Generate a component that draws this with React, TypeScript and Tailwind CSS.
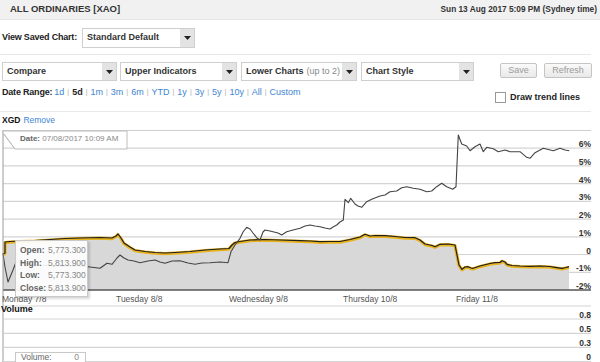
import React from "react";

type Pt = [number, number];

const MAIN: Pt[] = [
  [3, 254], [5, 253], [5, 242], [10, 241.5], [20, 241], [35, 240.5], [50, 239.5], [65, 238.5],
  [80, 238], [100, 237.5], [112, 238], [116, 236], [118, 234], [121, 238], [124, 243], [130, 247],
  [135, 250], [145, 251.5], [155, 252.5], [165, 253], [175, 252.5], [190, 251.5], [205, 250],
  [220, 249], [229, 248.5], [232, 245], [235, 242.5], [240, 241.5], [250, 240], [265, 239.5],
  [280, 240], [300, 240.7], [310, 241], [320, 241.7], [330, 241.5], [340, 241.5], [350, 239.5],
  [360, 237], [365, 234.3], [370, 236], [375, 235.5], [385, 235.7], [395, 236.5], [405, 237.5],
  [415, 237.7], [420, 240], [425, 244], [432, 245.5], [435, 246.7], [440, 244.3], [448, 244],
  [455, 245], [457, 255], [459, 265], [462, 269.3], [465, 267], [468, 266.7], [471, 268],
  [473, 268.3], [480, 266], [490, 263.5], [495, 262.7], [500, 262.5], [502, 260.7], [505, 262],
  [507, 264.3], [512, 265.5], [520, 266], [530, 266.3], [540, 266], [550, 266.5], [555, 267.3],
  [562, 268.3], [566, 267.5], [569, 266.7],
];

const XGD: Pt[] = [
  [3, 254], [5, 267], [8, 282], [13, 270], [16, 262], [20, 262], [40, 265], [60, 266], [80, 266],
  [88, 266.7], [100, 268.3], [107, 263.3], [112, 264.3], [117, 258], [120, 255], [124, 258],
  [128, 260], [134, 261], [140, 262.7], [148, 261], [155, 260], [160, 262], [165, 263.3],
  [172, 261], [180, 260.7], [188, 263], [195, 264.3], [202, 263], [210, 262.7], [220, 262],
  [228, 262.7], [231, 251.7], [235, 245], [240, 238.3], [243, 232], [246.7, 227.3], [250, 229],
  [253, 233], [257, 238], [260, 240], [263, 232], [265, 230], [270, 231], [273, 231.7],
  [278, 233], [281.7, 235], [286.7, 231.7], [293, 230], [300, 228.3], [305, 226], [310, 225],
  [315, 226], [320, 226.7], [325, 228], [330, 229], [333, 227], [336.7, 225], [340, 222],
  [343.3, 220], [345, 199.3], [348.3, 202.7], [350.7, 198.3], [355, 204], [358, 206],
  [361.7, 207.3], [366.7, 201.7], [371.7, 199.3], [380, 196], [385, 195], [390, 191.7],
  [396.7, 191], [401.7, 187.7], [406.7, 186.7], [413.3, 188.3], [420, 189.3], [426.7, 191.7],
  [431.7, 191], [436.7, 186.7], [441.7, 183.3], [446.7, 186.7], [452.7, 189.3], [456, 186.7],
  [458.3, 135], [461.7, 144], [466.7, 146], [470, 150.7], [475, 146.7], [480, 144],
  [483.3, 151.7], [486.7, 147.3], [493.3, 148.7], [498.3, 151.7], [505, 150], [510, 151.7],
  [520, 151.7], [526.7, 157.3], [530, 158.3], [535, 152.7], [543.3, 148.3], [553.3, 150.7],
  [560, 148.3], [565, 150], [569.3, 150.7],
];

const pts = (a: Pt[]) => a.map((p) => p.join(",")).join(" ");

const GRID = [148.2, 165.9, 183.7, 201.4, 219.1, 236.8, 254.5, 272.3];
const PCT = ["6%", "5%", "4%", "3%", "2%", "1%", "0", "-1%"];
const VOL_GRID = [306, 319, 333.3, 347.3, 361.5];
const VOL = ["0.8", "0.5", "0.3", "0"];
const DAYS: [string, number][] = [
  ["Monday 7/8", 2],
  ["Tuesday 8/8", 116],
  ["Wednesday 9/8", 229],
  ["Thursday 10/8", 343],
  ["Friday 11/8", 456],
];
const RANGES = ["1d", "5d", "1m", "3m", "6m", "YTD", "1y", "3y", "5y", "10y", "All", "Custom"];

function Caret() {
  return (
    <svg width="7" height="4" viewBox="0 0 7 4">
      <path d="M0 0h7L3.5 4z" fill="#222" />
    </svg>
  );
}

function Select({ className, children }: { className: string; children: React.ReactNode }) {
  return (
    <div className={`flex border border-[#cfcfcf] bg-white ${className}`}>
      <div className="flex-1 flex items-center pl-[4px] text-[9px] font-bold text-[#333] whitespace-nowrap overflow-hidden">
        {children}
      </div>
      <div className="w-[14px] bg-[#e3e3e3] flex items-center justify-center">
        <Caret />
      </div>
    </div>
  );
}

function Chart() {
  const fill = pts([...MAIN, [569, 290], [3, 290]]);
  return (
    <div className="relative h-[232px] mt-[4px]">
      <svg width="600" height="232" viewBox="0 130 600 232" className="block" fontFamily="'Liberation Sans', Arial, sans-serif">
        <line x1="3" y1="130.5" x2="591" y2="130.5" stroke="#cfcfcf" strokeWidth="1.2" />
        {GRID.map((y) => (
          <line key={y} x1="3" y1={y} x2="591" y2={y} stroke="#d4d4d4" strokeWidth="1.2" />
        ))}
        <polygon points={fill} fill="#d8d8d8" />
        <polyline points={pts(MAIN)} fill="none" stroke="#e8b320" strokeWidth="3.2" strokeLinejoin="round" transform="translate(0 0.6)" />
        <polyline points={pts(MAIN)} fill="none" stroke="#1e1e1e" strokeWidth="1.2" strokeLinejoin="round" />
        <polyline points={pts(XGD)} fill="none" stroke="#444" strokeWidth="1.1" strokeLinejoin="round" />
        <line x1="3" y1="290" x2="591" y2="290" stroke="#555" strokeWidth="1.6" />
        <line x1="3" y1="130" x2="3" y2="362" stroke="#9a9a9a" strokeWidth="1" />
        {PCT.map((t, i) => (
          <text key={t} x="591" y={GRID[i] - 1} textAnchor="end" fontSize="8.5" fontWeight="bold" fill="#333">
            {t}
          </text>
        ))}
        <text x="591" y="289" textAnchor="end" fontSize="8.5" fontWeight="bold" fill="#333">-2%</text>
        {DAYS.map(([t, x]) => (
          <text key={t} x={x} y="301.5" fontSize="8.5" fill="#555">{t}</text>
        ))}
        {VOL_GRID.map((y) => (
          <line key={y} x1="3" y1={y} x2="591" y2={y} stroke="#d4d4d4" strokeWidth="1.2" />
        ))}
        <text x="1" y="312.3" fontSize="9" fontWeight="bold" fill="#111">Volume</text>
        {VOL.map((t, i) => (
          <text key={t} x="591" y={VOL_GRID[i + 1] - 1.2} textAnchor="end" fontSize="8.5" fontWeight="bold" fill="#333">
            {t}
          </text>
        ))}
        <polygon points="3,131 127,131 127,149 15,149 3,133" fill="#fff" fillOpacity="0.92" stroke="#bdbdbd" strokeWidth="1" />
        <line x1="3" y1="133" x2="15" y2="149" stroke="#bdbdbd" strokeWidth="1" />
      </svg>

      <div className="absolute left-[20px] top-[3px] text-[8px] leading-[12px] whitespace-nowrap">
        <span className="font-bold text-[#666]">Date:</span> <span className="text-[#888]">07/08/2017 10:09 AM</span>
      </div>

      <div className="absolute left-[15px] top-[110px] w-[73px] h-[57px] bg-white/90 border border-[#c9c9c9] shadow-[2px_2px_2px_rgba(0,0,0,0.15)] pl-[4px] pt-[3px] text-[8.5px] leading-[12.6px]">
        {[
          ["Open:", "5,773.300"],
          ["High:", "5,813.900"],
          ["Low:", "5,773.300"],
          ["Close:", "5,813.900"],
        ].map(([k, v]) => (
          <div key={k} className="flex whitespace-nowrap">
            <span className="w-[28px] font-bold text-[#666]">{k}</span>
            <span className="text-[#888]">{v}</span>
          </div>
        ))}
      </div>

      <div className="absolute left-[15px] top-[222px] w-[71px] h-[20px] bg-white/90 border border-[#c9c9c9] pl-[5px] pr-[6px] text-[8.5px] leading-[9px] flex justify-between">
        <span className="text-[#666]">Volume:</span>
        <span className="text-[#888]">0</span>
      </div>
    </div>
  );
}

export default function App() {
  return (
    <div className="w-[600px] h-[362px] overflow-hidden bg-white font-['Liberation_Sans',Arial,sans-serif] text-[#333]">
      {/* Header */}
      <div className="h-[20px] bg-[#f1f1f1] border-b border-[#e6e6e6] flex items-center justify-between pl-[10px] pr-[3px] font-bold text-[#333]">
        <span className="text-[9.5px]">ALL ORDINARIES [XAO]</span>
        <span className="text-[8.3px]">Sun 13 Aug 2017 5:09 PM (Sydney time)</span>
      </div>

      {/* Saved chart */}
      <div className="mt-[8px] h-[20px] pl-[2px] flex items-center">
        <span className="w-[80px] text-[9px] font-bold text-[#222] tracking-[-0.2px]">View Saved Chart:</span>
        <Select className="w-[113px] h-[20px]">Standard Default</Select>
      </div>

      <div className="mt-[6px] w-[591px] border-t border-[#e8e8e8]" />

      {/* Selectors */}
      <div className="mt-[7px] h-[19px] pl-[2px] flex items-start">
        <Select className="w-[115px] h-[19px]">Compare</Select>
        <Select className="ml-[3px] w-[117px] h-[19px]">Upper Indicators</Select>
        <Select className="ml-[4px] w-[116px] h-[19px]">
          Lower Charts<span className="ml-[3px] font-normal text-[#888]">(up to 2)</span>
        </Select>
        <Select className="ml-[4px] w-[113px] h-[19px]">Chart Style</Select>
        <button className="ml-[26px] mt-[1px] w-[37px] h-[15px] border border-[#c4c4c4] rounded-[2px] bg-gradient-to-b from-[#fafafa] to-[#e9e9e9] text-[9px] text-[#9a9a9a] leading-none">
          Save
        </button>
        <button className="ml-[7px] mt-[1px] w-[48px] h-[15px] border border-[#c4c4c4] rounded-[2px] bg-gradient-to-b from-[#fafafa] to-[#e9e9e9] text-[9px] text-[#9a9a9a] leading-none">
          Refresh
        </button>
      </div>

      {/* Date range */}
      <div className="mt-[5px] h-[17px] pl-[2px] pr-[20px] flex justify-between items-start">
        <div className="flex items-center text-[9px] leading-[12px] whitespace-nowrap">
          <span className="font-bold text-[#222] mr-[2px] tracking-[-0.2px]">Date Range:</span>
          {RANGES.map((r, i) => (
            <React.Fragment key={r}>
              {i > 0 && <span className="mx-[3px] text-[7px] text-[#aaa]">|</span>}
              <span className={r === "5d" ? "font-bold text-[#222]" : "text-[#3d85d1]"}>{r}</span>
            </React.Fragment>
          ))}
        </div>
        <div className="mt-[5px] flex items-center">
          <span className="w-[11px] h-[11px] border border-[#999] bg-white" />
          <span className="ml-[4px] text-[9px] font-bold text-[#222]">Draw trend lines</span>
        </div>
      </div>

      <div className="mt-[8px] w-[591px] border-t border-[#e8e8e8]" />

      <div className="mt-[2px] h-[12px] pl-[2px] flex items-center text-[8.5px]">
        <span className="font-bold text-[#111]">XGD</span>
        <span className="ml-[3px] text-[#3d85d1]">Remove</span>
      </div>

      <Chart />
    </div>
  );
}
